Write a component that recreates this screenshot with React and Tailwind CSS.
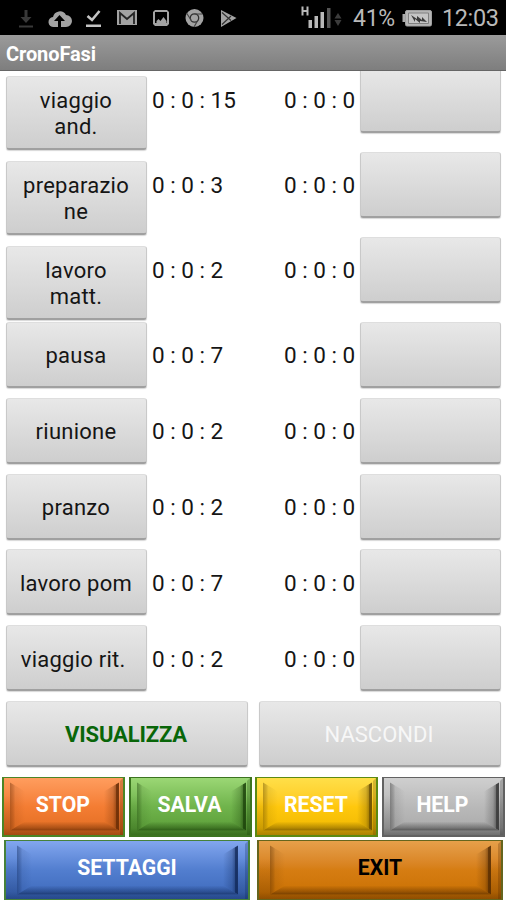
const PHASES = [
  { lines: ['viaggio', 'and.'], time: '0 : 0 : 15', row: 'h-[85px]' },
  { lines: ['preparazio', 'ne'], time: '0 : 0 : 3', row: 'h-[85px]' },
  { lines: ['lavoro', 'matt.'], time: '0 : 0 : 2', row: 'h-[85px]' },
  { lines: ['pausa'], time: '0 : 0 : 7', row: 'h-[76px]' },
  { lines: ['riunione'], time: '0 : 0 : 2', row: 'h-[76px]' },
  { lines: ['pranzo'], time: '0 : 0 : 2', row: 'h-[75px]' },
  { lines: ['lavoro pom'], time: '0 : 0 : 7', row: 'h-[76px]', low: true },
  { lines: ['viaggio rit. '], time: '0 : 0 : 2', row: 'h-[76px]', low: true },
];

const ACTIONS = [
  { label: 'STOP', id: 'stop', face: 'from-[#ff9d5e] via-[#f47d33] to-[#e06c20] border-[#4b8526]', shade: '#5a2400', text: 'text-white' },
  { label: 'SALVA', id: 'salva', face: 'from-[#9bd775] via-[#70b44c] to-[#589a35] border-[#3c7420]', shade: '#153a05', text: 'text-white' },
  { label: 'RESET', id: 'reset', face: 'from-[#ffdf48] via-[#ffc80d] to-[#efb700] border-[#5c8a12]', shade: '#5a4100', text: 'text-white' },
  { label: 'HELP', id: 'help', face: 'from-[#cfcfcf] via-[#b9b9b9] to-[#a8a8a8] border-[#626262]', shade: '#282828', text: 'text-white' },
];

const WIDE_ACTIONS = [
  { label: 'SETTAGGI', id: 'settaggi', face: 'from-[#82a6ef] via-[#527ecf] to-[#3c68ba] border-[#46813a]', shade: '#0c2250', text: 'text-white' },
  { label: 'EXIT', id: 'exit', face: 'from-[#e6a04a] via-[#d67d12] to-[#c86f00] border-[#65651d]', shade: '#4b2500', text: 'text-black' },
];

function GreyButton({ children, className = '' }) {
  return (
    <button
      type="button"
      className={`flex shrink-0 flex-col items-center justify-center rounded-[3px] border border-b-2 border-t-[#dedede] border-x-[#c9c9c9] border-b-[#a0a0a0] bg-linear-to-b from-[#e8e8e8] to-[#cecece] shadow-[0_1px_1px_#d8d8d8] ${className}`}
    >
      {children}
    </button>
  );
}

// shaded slopes of a raised button: left, right, bottom and the frame round them
function Bevel({ id, shade, w, h, left, right, my }) {
  const d = 15;
  const b = 9;
  const r = w - right;
  const bt = h - my;
  return (
    <svg className="absolute inset-0 h-full w-full" viewBox={`0 0 ${w} ${h}`} preserveAspectRatio="none">
      <defs>
        <linearGradient id={`${id}-l`}>
          <stop offset="0" stopColor={shade} stopOpacity="0.42" />
          <stop offset="0.22" stopColor={shade} stopOpacity="0.25" />
          <stop offset="0.35" stopColor={shade} stopOpacity="0.1" />
          <stop offset="1" stopColor={shade} stopOpacity="0" />
        </linearGradient>
        <linearGradient id={`${id}-r`}>
          <stop offset="0" stopColor={shade} stopOpacity="0" />
          <stop offset="0.6" stopColor={shade} stopOpacity="0.25" />
          <stop offset="0.78" stopColor={shade} stopOpacity="0.5" />
          <stop offset="0.84" stopColor={shade} stopOpacity="0.85" />
          <stop offset="1" stopColor={shade} stopOpacity="0.8" />
        </linearGradient>
        <linearGradient id={`${id}-b`} x2="0" y2="1">
          <stop offset="0" stopColor={shade} stopOpacity="0" />
          <stop offset="0.7" stopColor={shade} stopOpacity="0.4" />
          <stop offset="1" stopColor={shade} stopOpacity="0.65" />
        </linearGradient>
        <linearGradient id={`${id}-f`} x2="0" y2="1">
          <stop offset="0.3" stopColor={shade} stopOpacity="0" />
          <stop offset="0.88" stopColor={shade} stopOpacity="0.25" />
          <stop offset="1" stopColor={shade} stopOpacity="0.45" />
        </linearGradient>
      </defs>
      <path d={`M0 0H${w}V${h}H0ZM${left} ${my}V${bt}H${r}V${my}Z`} fillRule="evenodd" fill={`url(#${id}-f)`} />
      <path d={`M${left} ${my}L${left + d} ${my + b}V${bt - b}L${left} ${bt}Z`} fill={`url(#${id}-l)`} />
      <path d={`M${r} ${my}L${r - d} ${my + b}V${bt - b}L${r} ${bt}Z`} fill={`url(#${id}-r)`} />
      <path d={`M${left} ${bt}L${left + d} ${bt - b}H${r - d}L${r} ${bt}Z`} fill={`url(#${id}-b)`} />
      <path d={`M${w} 0V${h}H${w - 3}V3Z`} fill={shade} fillOpacity="0.25" />
    </svg>
  );
}

function BevelButton({ action, className, w, h, left, right, my }) {
  return (
    <button
      type="button"
      className={`relative flex shrink-0 items-center justify-center border-2 border-t bg-linear-to-b text-[21.2px] leading-none font-bold ${action.face} ${action.text} ${className}`}
    >
      <Bevel id={action.id} shade={action.shade} w={w} h={h} left={left} right={right} my={my} />
      <span className="relative">{action.label}</span>
    </button>
  );
}

function StatusIcons() {
  return (
    <svg width="253" height="35" viewBox="0 0 253 35" fill="#a3a3a3">
      <path d="M24.5 10h3v7h4l-5.500 6-5.500-6h4zM19 25.500h14v2H19z" fill="#393939" />
      <path
        fillRule="evenodd"
        d="M54 27a5 5 0 0 1-1-10 7 7 0 0 1 13-2 6 6 0 0 1 0 12h-5v-6h4l-5.500-6-5.500 6h4v6z"
      />
      <path d="M87.500 16l4.500 4 7.500-9" fill="none" stroke="#c4c4c4" strokeWidth="2.6" />
      <path d="M86 24.500h15v2.500H86z" fill="#c4c4c4" />
      <path d="M117 10h20v15h-20z" />
      <path d="M120 24V13l7 6 7-6v11" fill="none" stroke="#252525" strokeWidth="1.8" />
      <path fillRule="evenodd" d="M155 10h12l2 2v12l-2 2h-12l-2-2V12zM155 12v11h12V12z" />
      <path d="M156.500 23v-2l2-2 2 2 3-4 3 4v2z" />
      <circle cx="194.500" cy="18" r="9" />
      <circle cx="194.500" cy="18" r="4.200" fill="none" stroke="#303030" strokeWidth="1.300" />
      <path d="M194.500 14h8M191 20l-4.500-7M198 20l-4 7" stroke="#454545" strokeWidth="1.200" />
      <circle cx="194.500" cy="18" r="2.200" />
      <path d="M221 10l15.500 8-15.500 9z" />
      <path d="M222 12.500l9 8M222 24.500l9-8.500" stroke="#303030" strokeWidth="1.200" />
    </svg>
  );
}

function SignalIcon() {
  return (
    <svg width="44" height="35" viewBox="300 0 44 35" fill="#b9b9b9">
      <path d="M302.500 6.500v9M307.500 6.500v9M302.500 11h5" stroke="#b9b9b9" strokeWidth="2" />
      <path d="M308.500 20H312v8h-3.500zM314.500 16h3.500v12h-3.500zM320.500 12h3.500v16h-3.500z" />
      <path d="M327 8h3.500v20H327z" fill="#555" />
      <path d="M334.500 18.500l3.500-5.500 3.500 5.500zM334.500 20l3.500 6 3.500-6z" fill="#3c3c3c" />
    </svg>
  );
}

function BatteryIcon() {
  return (
    <svg width="32" height="35" viewBox="402 0 32 35">
      <rect x="402.500" y="14" width="4" height="8" fill="#aaa" />
      <rect x="405.500" y="10.500" width="26" height="15.500" rx="1.500" fill="#b5b5b5" stroke="#a0a0a0" />
      <path d="M408.500 13h20v10.500h-20z" fill="#c5c5c5" stroke="#808080" />
      <path d="M411 15l6 4v-3l5 4v-3l5 5-7-1v2l-5-4v3z" fill="#3a3a3a" />
    </svg>
  );
}

function PhaseRow({ phase }) {
  const two = phase.lines.length > 1;
  const size = two ? 'mt-[9px] h-[74px] pt-[3px]' : phase.low ? 'h-[66px] pt-1' : 'h-[66px] pt-0.5';
  const top = phase.low ? 'mt-5' : 'mt-[19px]';
  return (
    <div className={`flex shrink-0 items-start pl-1.5 ${phase.row}`}>
      <GreyButton className={`w-[141px] pr-[1px] text-[22px] leading-[26px] tracking-[0.25px] ${size}`}>
        {phase.lines.map((line) => (
          <span key={line} className="whitespace-pre">{line}</span>
        ))}
      </GreyButton>
      <span className={`ml-[5px] w-[132px] text-[22.5px] leading-7 whitespace-pre ${top}`}>{phase.time}</span>
      <span className={`w-[75.5px] text-[22.5px] leading-7 whitespace-pre ${top}`}>0 : 0 : 0</span>
      <GreyButton className="h-[66px] w-[141.5px]" />
    </div>
  );
}

export default function App() {
  return (
    <div className="flex h-[900px] w-[506px] flex-col overflow-hidden bg-white font-[Roboto,sans-serif] text-[#151515]">
      <div className="flex h-[35px] shrink-0 items-center bg-black text-[#b9b9b9]">
        <StatusIcons />
        <div className="ml-[47px] flex items-center">
          <SignalIcon />
          <span className="ml-[9px] w-[43px] pt-0.5 text-[23px] leading-none tracking-[-0.3px] whitespace-nowrap">41%</span>
          <span className="ml-[6px]">
            <BatteryIcon />
          </span>
          <span className="ml-[8px] pt-0.5 text-[23.5px] leading-none tracking-[-0.4px]">12:03</span>
        </div>
      </div>
      <header className="flex h-9 shrink-0 items-center border-b border-[#666] bg-linear-to-b from-[#9b9b9b] to-[#7e7e7e] pt-0.5 pl-1.5 text-[20px] font-bold tracking-[-0.1px] text-white">
        CronoFasi
      </header>

      <main className="flex h-[630px] shrink-0 flex-col justify-end overflow-hidden">
        {PHASES.map((phase) => (
          <PhaseRow key={phase.lines[0]} phase={phase} />
        ))}
      </main>

      <div className="flex h-[76px] shrink-0 gap-[11px] px-1.5">
        <GreyButton className="h-[66px] w-[242px] pt-0.5 pr-0.5 text-[22px] font-bold tracking-[-0.15px] text-[#096609]">
          VISUALIZZA
        </GreyButton>
        <GreyButton className="h-[66px] w-[242px] pt-0.5 pr-0.5 text-[22px] text-[#f7f7f7]">NASCONDI</GreyButton>
      </div>

      <div className="flex shrink-0 gap-[3.5px] pl-[2.4px]">
        {ACTIONS.map((a) => (
          <BevelButton key={a.label} action={a} className="h-[60px] w-[123px] pr-0.5 pb-[3px]" w={119} h={57} left={6} right={4} my={4.5} />
        ))}
      </div>
      <div className="mt-[3px] flex shrink-0 gap-[7px] pl-1">
        {WIDE_ACTIONS.map((a) => (
          <BevelButton key={a.label} action={a} className="h-[61px] w-[246px] pb-[4px]" w={242} h={58} left={11} right={10} my={4.5} />
        ))}
      </div>
    </div>
  );
}
